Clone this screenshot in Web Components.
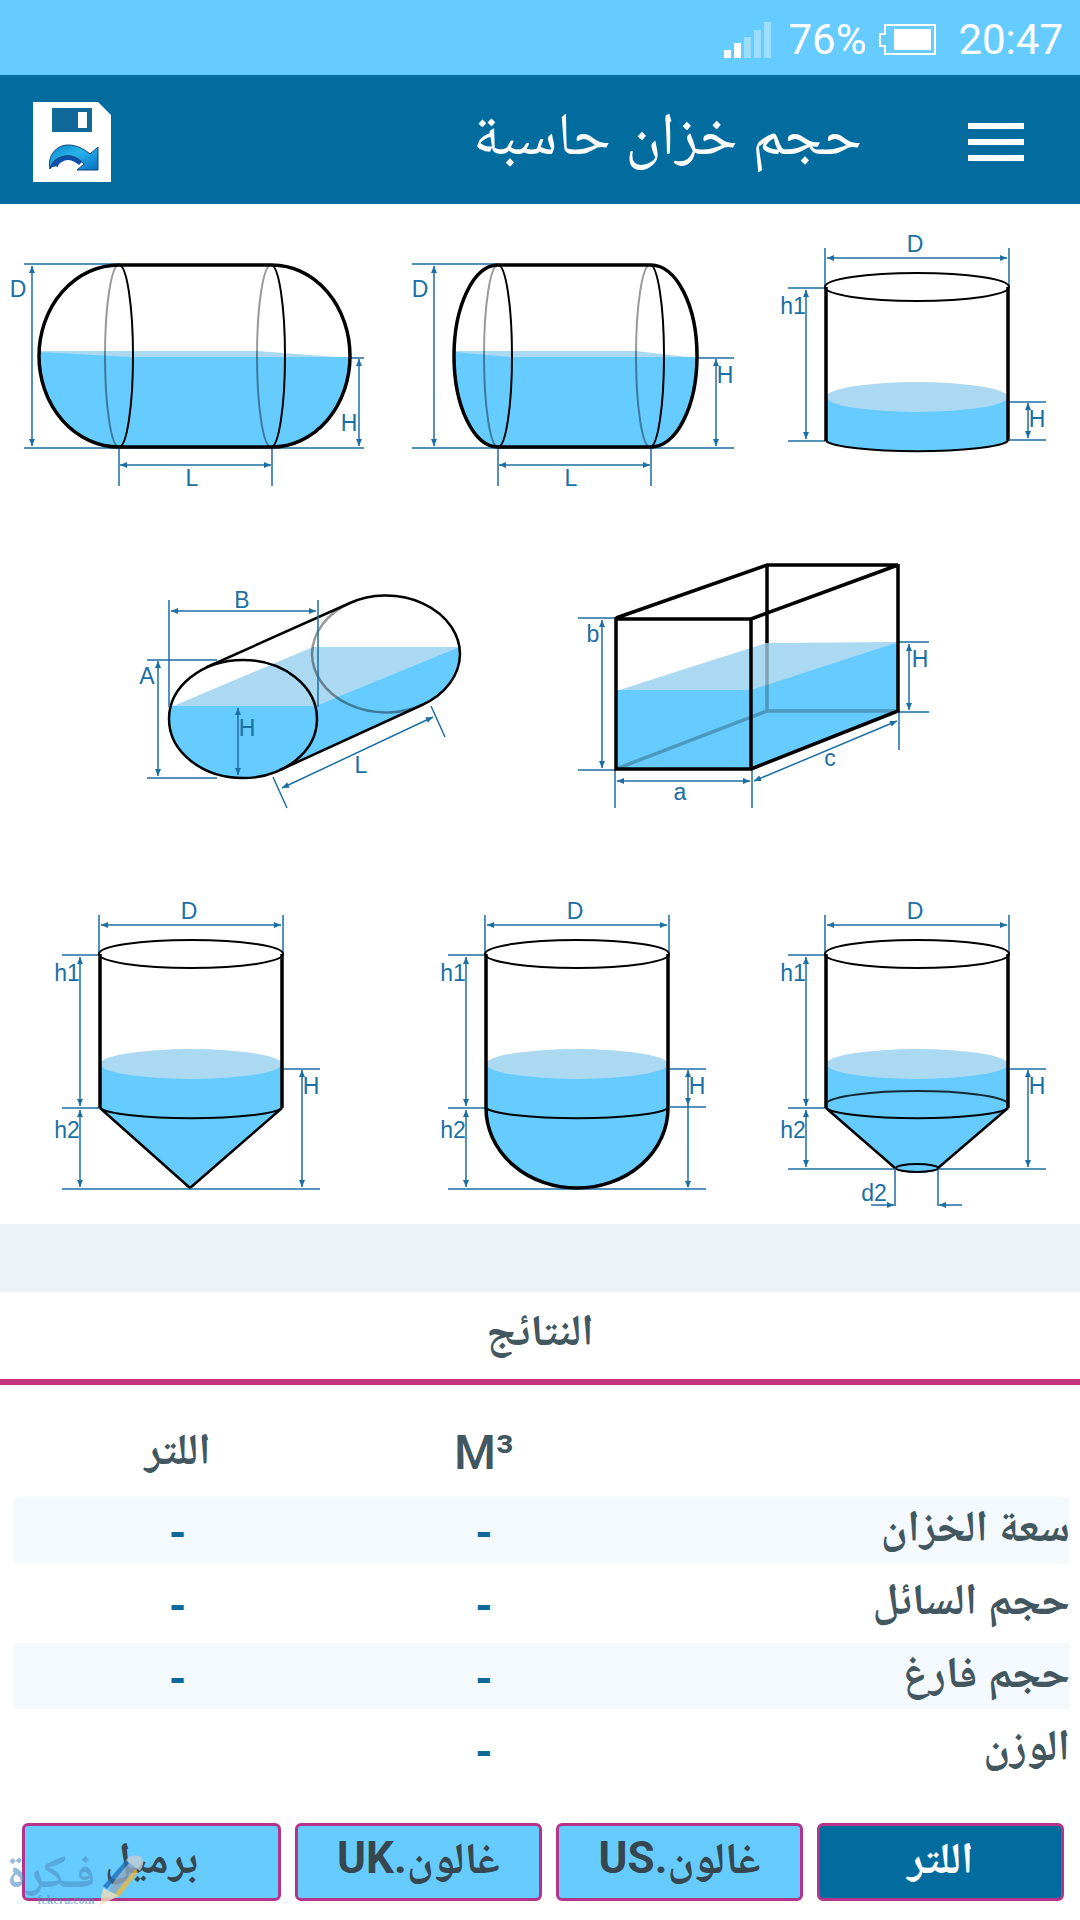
<!DOCTYPE html>
<html lang="ar" dir="rtl">
<head>
<meta charset="utf-8">
<meta name="viewport" content="width=device-width, initial-scale=1">
<title>حجم خزان حاسبة</title>
<style>
  body {
    margin: 0;
    background-color: #fff;
    color: #435760;
    font-family: Roboto, "Noto Naskh Arabic", "Noto Sans Arabic", "DejaVu Sans", sans-serif;
    --color-main: #026c9f;
    --color-water: #66ccff;
    --color-accent: #c5327f;
  }
</style>
</head>
<body>
<tank-app></tank-app>

<script>
/**
 * Create a template from a string of markup.
 *
 * @param {string} markup - Styles and markup of an element.
 * @returns {HTMLTemplateElement} - The template.
 */
const createTemplate = (markup) => {
  const template = document.createElement('template')
  template.innerHTML = markup
  return template
}

/**
 * Base class that attaches the shadowDOM.
 */
class BaseElement extends HTMLElement {
  constructor () {
    super()

    this.attachShadow({ mode: 'open' })
      .appendChild(this.constructor.template.content.cloneNode(true))
  }
}

/* ---------- Status bar ---------- */

customElements.define('status-bar',
  class extends BaseElement {
    static template = createTemplate(`
      <style>
        :host {
          display: flex;
          direction: ltr;
          justify-content: flex-end;
          align-items: center;
          box-sizing: border-box;
          height: 75px;
          padding: 4px 17px 0 0;
          background-color: var(--color-water);
          color: #fff;
          font-size: 42px;
          line-height: 48px;
        }

        .battery {
          margin: 0 22px 0 13px;
        }

        .signal {
          margin-right: 17px;
        }
      </style>
      <svg class="signal" width="47" height="36" fill="#fff" aria-hidden="true">
        <path d="M0 28h7v8H0zM10 21h7v15h-7z"/>
        <path opacity=".35" d="M20 15h7v21h-7zM30 8h7v28h-7zM40 0h7v36h-7z"/>
      </svg>
      <span>76%</span>
      <svg class="battery" width="57" height="32" aria-hidden="true">
        <path d="M6 1h50v29H6v-8H1V10h5z" fill="none" stroke="#fff" stroke-width="2"/>
        <path d="M15 5h37v21H15z" fill="#fff"/>
      </svg>
      <span>20:47</span>
    `)
  })

/* ---------- Header ---------- */

customElements.define('app-header',
  class extends BaseElement {
    static template = createTemplate(`
      <style>
        :host {
          display: flex;
          align-items: center;
          box-sizing: border-box;
          height: 129px;
          padding: 4px 56px 0 33px;
          background-color: var(--color-main);
          color: #fff;
        }

        h1 {
          flex: 1;
          margin: 0 106px 0 0;
          padding-bottom: 16px;
          font-size: 60px;
          font-weight: 400;
          line-height: 72px;
        }

        button {
          display: block;
          padding: 0;
          border: 0;
          background: none;
          cursor: pointer;
        }

        svg {
          display: block;
        }
      </style>
      <button aria-label="القائمة">
        <svg width="56" height="38" fill="#fff"><path d="M0 0h56v6H0zM0 16h56v6H0zM0 32h56v6H0z"/></svg>
      </button>
      <h1><slot></slot></h1>
      <button aria-label="حفظ">
        <svg width="78" height="80" viewBox="0 0 78 80">
          <defs>
            <linearGradient id="arrow" x1="0" y1="0" x2="1" y2="1">
              <stop offset="0" stop-color="#0d86c8"/>
              <stop offset=".45" stop-color="#27b4ec"/>
              <stop offset="1" stop-color="#0a6fc0"/>
            </linearGradient>
          </defs>
          <path fill="#fff" d="M0 0h65l13 13v67H0z"/>
          <path fill="#11699a" d="M19 6h40v24H19z"/>
          <path fill="#fff" d="M45 10h9v16h-9z"/>
          <path fill="#0a4fa8" d="M17 67c0-8 5-14 11-14 9-2 15 1 21 7l-3 3c-7-6-13-6-17-3-3 1-4 3-4 5-4-1-6 0-8 2z"/>
          <path fill="url(#arrow)" stroke="#14427c" stroke-width="1" d="M17 67c-3-14 7-24 18-24 9 0 16 4 22 9l8-7v23H44l7-6c-7-8-15-10-23-7-6 2-10 6-11 12z"/>
        </svg>
      </button>
    `)
  })

/* ---------- Tank drawings ---------- */

/**
 * Arrow head with its tip at x, y.
 */
const head = (x, y, angle) =>
  `<path class="head" d="M0 0L-7 -3V3Z" transform="translate(${x} ${y}) rotate(${angle})"/>`

/**
 * Dimension line with an arrow head on both ends.
 */
const dim = (x1, y1, x2, y2) => {
  const angle = Math.round(Math.atan2(y2 - y1, x2 - x1) * 180 / Math.PI)
  return `<path class="dim" d="M${x1} ${y1}L${x2} ${y2}"/>` +
    head(x2, y2, angle) + head(x1, y1, angle + 180)
}

/**
 * Thin lines that lead to the dimensions.
 */
const ext = (d) => `<path class="dim" d="${d}"/>`

const label = (x, y, text) => `<text x="${x}" y="${y}">${text}</text>`

/**
 * Lying tank with rounded ends.
 *
 * @param {object} t - Edges and joints of the tank.
 * @returns {string} - SVG markup.
 */
const capsule = (t) => {
  const outer = `M${t.j1} 45H${t.j2}A${t.right - t.j2} 91 0 0 1 ${t.j2} 227H${t.j1}A${t.j1 - t.left} 91 0 0 1 ${t.j1} 45Z`
  const ring = (x) => `
    <path class="line hidden" d="M${x} 45A14 91 0 0 0 ${x} 227"/>
    <path class="line" d="M${x} 45A14 91 0 0 1 ${x} 227"/>`
  return `
    <path class="surface" d="M${t.left + 1} 131H${t.j2 - 15}L${t.right - 1} 138H${t.left + 1}Z"/>
    <path class="water" d="M${t.left} 132L${t.j1 + 12} 137H${t.right}A${t.right - t.j2} 90 0 0 1 ${t.j2} 227H${t.j1}A${t.j1 - t.left} 95 0 0 1 ${t.left} 132Z"/>
    ${ext(`M${t.start} 44H${t.j1}M${t.start} 228H${t.end}M${t.right} 138H${t.end}M${t.j1} 228V266M${t.j2} 228V266`)}
    ${ring(t.j1)}${ring(t.j2 - 1)}
    <path class="bold" d="${outer}"/>
    ${dim(t.dim, 46, t.dim, 226)}${label(t.dim - 14, 77, 'D')}
    ${dim(t.h, 139, t.h, 226)}${label(t.hx, t.hy, 'H')}
    ${dim(t.j1 + 1, 245, t.j2 - 1, 245)}${label(t.lx, 266, 'L')}`
}

/**
 * Standing cylinder, shared by the four upright tanks.
 *
 * @param {string} base - What closes the cylinder below.
 * @param {string} water - Outline of the liquid in the base.
 * @returns {string} - SVG markup.
 */
const cylinder = (base, water) => `
  <path class="water" d="M66 177H248V221${water}H66Z"/>
  <ellipse class="surface" cx="157" cy="177" rx="91" ry="15"/>
  ${ext('M65 28V67M249 28V67M28 68H65M28 221H65M249 182H286')}
  <ellipse class="line" cx="157" cy="67" rx="92" ry="14"/>
  <path class="bold" d="M66 67V221M248 67V221"/>
  ${base}
  ${dim(67, 38, 247, 38)}${label(155, 32, 'D')}
  ${dim(46, 70, 46, 219)}${label(33, 94, 'h1')}`

const upperArc = 'M66 221A92 12 0 0 0 248 221'

const tanks = {
  sphere: {
    box: '0 0 390 280',
    title: 'D H L',
    drawing: capsule({ left: 39, right: 350, j1: 119, j2: 272, dim: 32, start: 24, end: 364, h: 359, hx: 349, hy: 211, lx: 192 })
  },
  dished: {
    box: '0 0 370 280',
    title: 'D H L',
    drawing: capsule({ left: 64, right: 307, j1: 108, j2: 261, dim: 44, start: 22, end: 344, h: 326, hx: 335, hy: 163, lx: 181 })
  },
  upright: {
    box: '0 0 320 280',
    title: 'D H h1',
    drawing: cylinder(`
      <path class="line" d="${upperArc}"/>
      ${ext('M249 220H286')}${dim(268, 183, 268, 218)}${label(277, 207, 'H')}`,
    'A92 12 0 0 1 66 221')
  },
  oval: {
    box: '0 0 540 287',
    title: 'A B H L',
    drawing: `
      <path class="surface" d="M171 157L313 97H459L316 157Z"/>
      <path class="water" d="M171 156A74 59 0 0 0 280 220L422 155A74 59 0 0 0 459 97L316 156Z"/>
      <path class="line mid hidden" d="M350 53A74 59 0 0 0 312 104A74 59 0 0 0 422 155"/>
      <path class="line mid" d="M207 117L350 53A74 59 0 0 1 460 104A74 59 0 0 1 422 155L280 220"/>
      <ellipse class="line mid" cx="243" cy="169" rx="74" ry="59"/>
      ${ext('M169 50V157M318 50V157M147 110H217M147 228H217M273 227L287 258M431 156L445 187')}
      ${dim(171, 61, 316, 61)}${label(242, 58, 'B')}
      ${dim(158, 111, 158, 226)}${label(147, 134, 'A')}
      ${dim(238, 158, 238, 225)}${label(247, 186, 'H')}
      ${dim(282, 238, 433, 167)}${label(361, 223, 'L')}`
  },
  box: {
    box: '0 0 540 287',
    title: 'a b c H',
    drawing: `
      <path class="surface" d="M76 141L226 93L358 92L211 141Z"/>
      <path class="water" d="M76 140H211L358 92V160L211 219H76Z"/>
      <path class="bold" opacity=".25" d="M227 93V161M76 219L227 161H358"/>
      ${ext('M38 68H76M38 220H76M75 219V258M212 219V258M358 92H389M358 162H389M359 160V200')}
      <path class="bold" d="M76 69H211V219H76ZM76 68L227 15H358L211 69M358 14V161L211 219M227 15V93"/>
      ${dim(62, 70, 62, 218)}${label(53, 92, 'b')}
      ${dim(77, 231, 210, 231)}${label(140, 250, 'a')}
      ${dim(369, 94, 369, 160)}${label(380, 117, 'H')}
      ${dim(214, 231, 357, 171)}${label(290, 216, 'c')}`
  },
  cone: {
    box: '-34 0 420 336',
    title: 'D H h1 h2',
    drawing: cylinder(`
      <path class="line" d="${upperArc}"/>
      <path class="line mid" d="M66 221L156 301L248 221"/>
      ${ext('M28 302H286')}${dim(46, 223, 46, 300)}${label(33, 251, 'h2')}
      ${dim(268, 183, 268, 300)}${label(277, 207, 'H')}`,
    'L156 301L66 221')
  },
  bowl: {
    box: '0 0 340 336',
    title: 'D H h1 h2',
    drawing: cylinder(`
      <path class="line" d="${upperArc}"/>
      ${ext('M28 302H286M249 220H286M268 218V300')}
      <path class="bold" d="M66 221A91 80 0 0 0 248 221"/>
      ${dim(46, 223, 46, 300)}${label(33, 251, 'h2')}
      ${dim(268, 183, 268, 218)}${head(268, 301, 90)}${label(277, 207, 'H')}`,
    'A91 80 0 0 1 66 221')
  },
  funnel: {
    box: '0 0 320 336',
    title: 'D H h1 h2 d2',
    drawing: cylinder(`
      <path class="line" opacity=".8" d="M66 216A92 14 0 0 1 248 216"/>
      <path class="line" d="${upperArc}"/>
      ${ext('M28 282H135M179 282H286M135 282V319M178 282V319M111 318H134M179 318H202')}
      <path class="line mid" d="M66 221L135 281M178 281L248 221"/>
      <ellipse class="line" cx="157" cy="281" rx="21" ry="4"/>
      ${dim(46, 223, 46, 280)}${label(33, 251, 'h2')}
      ${dim(268, 183, 268, 280)}${label(277, 207, 'H')}
      ${head(134, 318, 0)}${head(179, 318, 180)}${label(114, 314, 'd2')}`,
    'L179 281A22 5 0 0 1 135 281L66 221')
  }
}

customElements.define('tank-shape',
  /**
   * One tank that can be chosen. The kind attribute tells which one.
   */
  class extends BaseElement {
    static template = createTemplate(`
      <style>
        :host {
          display: block;
          min-width: 0;
        }

        button {
          display: block;
          width: 100%;
          padding: 0;
          border: 0;
          background: none;
          cursor: pointer;
        }

        svg {
          display: block;
          width: 100%;
          height: auto;
          direction: ltr;
          overflow: visible;
        }

        path, ellipse {
          fill: none;
        }

        .water { fill: var(--color-water); }
        .surface { fill: #abd9f2; }
        .line { stroke: #000; stroke-width: 2; }
        .mid { stroke-width: 2.5; }
        .hidden { opacity: .4; }
        .bold { stroke: #000; stroke-width: 3.5; stroke-linejoin: miter; }
        .dim { stroke: #1c6fa5; stroke-width: 1.5; }
        .head { fill: #1c6fa5; }

        text {
          fill: #1c6fa5;
          font-family: "Liberation Sans", Arial, sans-serif;
          font-size: 23px;
          text-anchor: middle;
        }
      </style>
      <button><svg></svg></button>
    `)

    connectedCallback () {
      const tank = tanks[this.getAttribute('kind')]
      const svg = this.shadowRoot.querySelector('svg')
      svg.setAttribute('viewBox', tank.box)
      svg.innerHTML = tank.drawing
      this.shadowRoot.querySelector('button').setAttribute('aria-label', tank.title)
    }
  })

customElements.define('tank-picker',
  class extends BaseElement {
    static template = createTemplate(`
      <style>
        :host {
          display: flex;
          flex-direction: column;
          gap: 50px;
          padding: 16px 0 1px;
          direction: ltr;
        }

        .row {
          display: grid;
        }

        .lying { grid-template-columns: 390fr 370fr 320fr; }
        .long { grid-template-columns: 1fr 1fr; }
        .standing { grid-template-columns: 420fr 340fr 320fr; }
      </style>
      <div class="row lying">
        <tank-shape kind="sphere"></tank-shape>
        <tank-shape kind="dished"></tank-shape>
        <tank-shape kind="upright"></tank-shape>
      </div>
      <div class="row long">
        <tank-shape kind="oval"></tank-shape>
        <tank-shape kind="box"></tank-shape>
      </div>
      <div class="row standing">
        <tank-shape kind="cone"></tank-shape>
        <tank-shape kind="bowl"></tank-shape>
        <tank-shape kind="funnel"></tank-shape>
      </div>
    `)
  })

/* ---------- Results ---------- */

customElements.define('result-table',
  class extends BaseElement {
    static template = createTemplate(`
      <style>
        :host {
          display: block;
        }

        h2 {
          box-sizing: border-box;
          height: 93px;
          margin: 0;
          border-bottom: 6px solid var(--color-accent);
          font-size: 44px;
          font-weight: 700;
          line-height: 76px;
          text-align: center;
        }

        .rows {
          padding: 23px 10px 0 14px;
        }

        table {
          width: 100%;
          table-layout: fixed;
          border-collapse: separate;
          border-spacing: 0 7px;
          font-size: 44px;
          line-height: 52px;
        }

        .name { width: 42%; }
        .cubic { width: 27%; }

        th, td {
          box-sizing: border-box;
          height: 66px;
          padding: 0;
          font-weight: 700;
          text-align: center;
          vertical-align: middle;
        }

        th {
          padding-bottom: 8px;
        }

        thead th {
          height: 75px;
        }

        .unit {
          padding-bottom: 0;
          font-size: 48px;
          font-weight: 500;
        }

        tbody th {
          text-align: start;
          white-space: nowrap;
        }

        tbody td {
          padding-top: 6px;
          color: #10699a;
        }

        tbody tr:nth-child(odd) {
          background-color: #f4f9fd;
        }
      </style>
      <h2>النتائج</h2>
      <div class="rows">
        <table>
          <colgroup><col class="name"><col class="cubic"><col></colgroup>
          <thead>
            <tr><td></td><th class="unit" scope="col">M³</th><th scope="col">اللتر</th></tr>
          </thead>
          <tbody>
            <tr><th scope="row">سعة الخزان</th><td>-</td><td>-</td></tr>
            <tr><th scope="row">حجم السائل</th><td>-</td><td>-</td></tr>
            <tr><th scope="row">حجم فارغ</th><td>-</td><td>-</td></tr>
            <tr><th scope="row">الوزن</th><td>-</td><td></td></tr>
          </tbody>
        </table>
      </div>
    `)
  })

customElements.define('unit-button',
  class extends BaseElement {
    static template = createTemplate(`
      <style>
        :host {
          display: block;
          min-width: 0;
        }

        button {
          display: block;
          box-sizing: border-box;
          width: 100%;
          height: 78px;
          padding: 0 0 8px;
          border: 3px solid #b3348a;
          border-radius: 6px;
          background-color: var(--color-water);
          color: #37474f;
          font: inherit;
          font-size: 44px;
          font-weight: 700;
          line-height: 60px;
          white-space: nowrap;
          cursor: pointer;
        }

        :host([selected]) button {
          background-color: var(--color-main);
          color: #fff;
        }
      </style>
      <button><slot></slot></button>
    `)

    connectedCallback () {
      this.shadowRoot.querySelector('button')
        .setAttribute('aria-pressed', this.hasAttribute('selected'))
    }
  })

/* ---------- Site mark ---------- */

customElements.define('site-mark',
  class extends BaseElement {
    static template = createTemplate(`
      <style>
        :host {
          display: block;
          width: 144px;
          pointer-events: none;
        }

        svg {
          display: block;
          direction: ltr;
          overflow: visible;
        }

        text {
          fill: #4c8fc4;
          font-weight: 700;
          text-anchor: middle;
        }
      </style>
      <svg width="144" height="56" viewBox="0 0 144 56">
        <g opacity=".6">
          <text x="51" y="35" font-size="46">فـكرة</text>
          <text x="66" y="52" font-size="12" font-family="Liberation Serif, serif">fekera.com</text>
        </g>
        <g opacity=".8">
          <path fill="#8fa9c4" d="M126 8L109 38L117 43L139 15Z"/>
          <path fill="#1f72b8" d="M126 8L129 11L107 37L103 34Z"/>
          <path fill="#efb53a" d="M135 17L138 20L119 45L114 43Z"/>
          <path fill="#c3ccd4" d="M126 8Q132 1 141 5Q146 10 140 19Z"/>
          <path fill="#f4dcb8" d="M103 36L119 44L100 53Z"/>
        </g>
      </svg>
    `)
  })

/* ---------- Page ---------- */

customElements.define('tank-app',
  class extends BaseElement {
    static template = createTemplate(`
      <style>
        :host {
          display: block;
          position: relative;
        }

        .band {
          height: 68px;
          background-color: #edf2f6;
        }

        .units {
          display: grid;
          grid-template-columns: 247fr 247fr 247fr 259fr;
          gap: 14px;
          padding: 34px 16px 19px 22px;
        }

        site-mark {
          position: absolute;
          left: 0;
          bottom: 12px;
        }
      </style>
      <status-bar></status-bar>
      <app-header>حجم خزان حاسبة</app-header>
      <main>
        <tank-picker></tank-picker>
        <div class="band"></div>
        <result-table></result-table>
        <div class="units">
          <unit-button selected>اللتر</unit-button>
          <unit-button>غالون.US</unit-button>
          <unit-button>غالون.UK</unit-button>
          <unit-button>برميل</unit-button>
        </div>
      </main>
      <site-mark></site-mark>
    `)
  })
</script>
</body>
</html>
